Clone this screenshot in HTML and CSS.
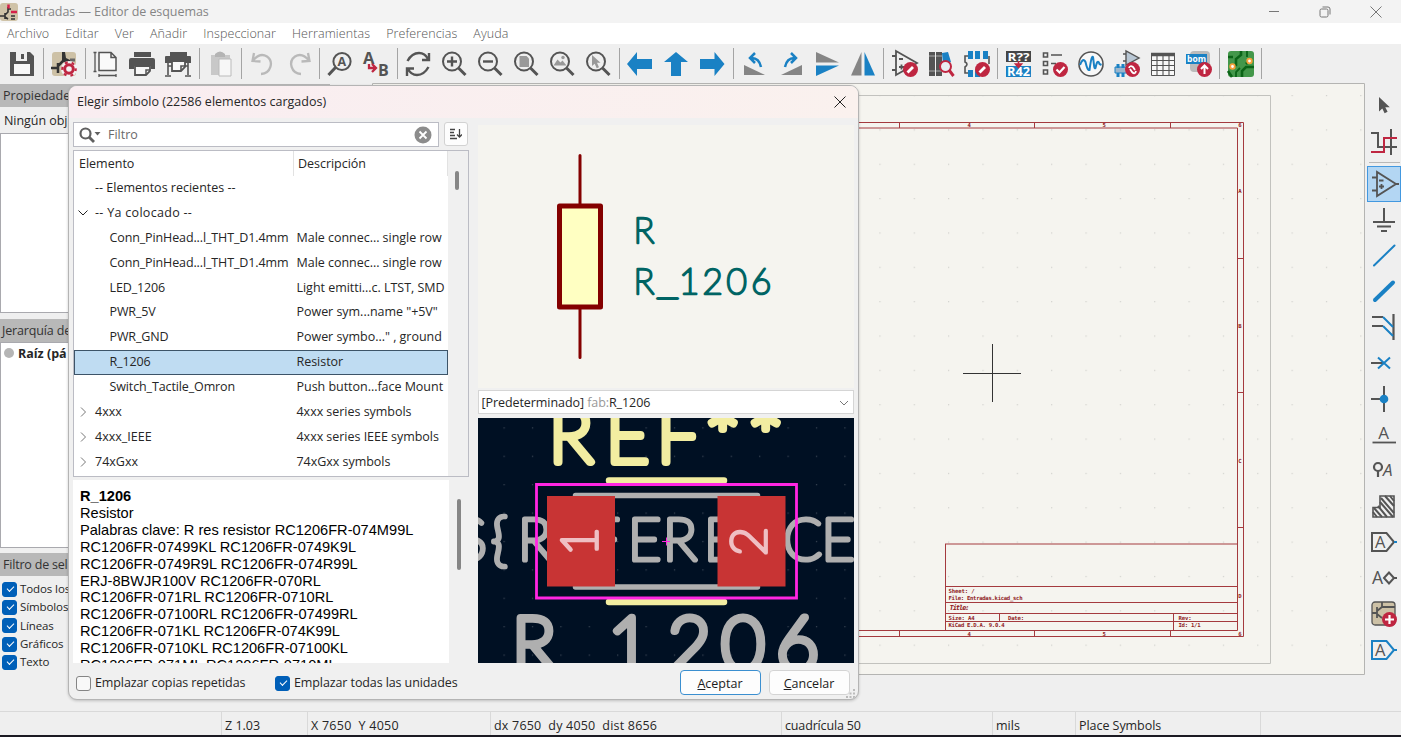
FILE: index.html
```html
<!DOCTYPE html>
<html lang="es">
<head>
<meta charset="utf-8">
<title>Entradas — Editor de esquemas</title>
<link rel="stylesheet" href="styles.css">
</head>
<body>
<div class="window">
  <header class="titlebar">
    <svg class="app-icon" viewBox="0 0 18 18"><rect width="18" height="18" rx="3" fill="#cfc3a8"/><path d="M0 13h5M5 10v6M5 12l3-3V4M8 6h3M5 14l3 2M11 13h4M11 16h4" fill="none" stroke="#333" stroke-width="1.600"/><path d="M8.500 1.500v4" stroke="#d5214b" stroke-width="2.500"/><path d="M11 9h6" stroke="#d5214b" stroke-width="2.500"/></svg>
    <span class="title">Entradas — Editor de esquemas</span>
    <div class="win-controls">
      <svg viewBox="0 0 12 12"><path d="M1 5.500h10"/></svg>
      <svg viewBox="0 0 12 12"><rect x="1" y="3" width="8" height="8" rx="1.500"/><path d="M3.500 1H9q2 0 2 2v5.500"/></svg>
      <svg viewBox="0 0 12 12"><path d="M.5 .5l11 11M11.500 .5l-11 11"/></svg>
    </div>
  </header>
  <nav class="menubar"><span>Archivo</span><span>Editar</span><span>Ver</span><span>Añadir</span><span>Inspeccionar</span><span>Herramientas</span><span>Preferencias</span><span>Ayuda</span></nav>

  <div class="toolbar">
    <svg class="ic" viewBox="0 0 26 26"><path d="M1 1h20l4 4v20H1z" fill="#545454"/><path d="M7 1h11v9H7z" fill="#efefef"/><path d="M12 3h3v5h-3z" fill="#545454"/><path d="M5 13h16v10H5z" fill="#f8f8f8"/></svg>
    <i class="sep"></i>
    <svg class="ic" viewBox="0 0 26 26"><rect x="1" y="1" width="24" height="24" rx="3" fill="#cdc1a6"/><path d="M0 17h7M7 12v10M7 15l5-5" fill="none" stroke="#333" stroke-width="2.500"/><path d="M11 1h3l1 6 4 2v2h-8z" fill="#333"/><path d="M19 9h5" stroke="#666" stroke-width="3"/><circle cx="18" cy="18" r="8" fill="#f2f2f2"/><g fill="none" stroke="#bf2641"><circle cx="18" cy="18" r="4.300" stroke-width="3"/><circle cx="18" cy="18" r="6.700" stroke-width="2.200" stroke-dasharray="3 4.020" stroke-dashoffset="1"/></g></svg>
    <i class="sep"></i>
    <svg class="ic line" viewBox="0 0 26 26"><path d="M6 1.500h12l5 5v13H6zM18 1.500v5h5" fill="#fafafa" stroke-width="1.500"/><path d="M2 1v20M.5 1.500h3M.5 20.500h3M6 24.500h17M6 23v3M23 23v3" stroke-width="1.300"/></svg>
    <svg class="ic" viewBox="0 0 26 26"><path d="M5 1h17v5H5zM2 7h22q2 0 2 2v9h-4v-3H5v3H0V9q0-2 2-2z" fill="#545454"/><path d="M6 15h15v5l-4 4H6z" fill="#f8f8f8" stroke="#545454" stroke-width="1.800"/><path d="M21 19h-4v5" fill="none" stroke="#545454" stroke-width="1.500"/></svg>
    <svg class="ic" viewBox="0 0 26 26"><path d="M5 1h17v4H5zM1 5h24q1 0 1 1v6H0V6q0-1 1-1z" fill="#545454"/><path d="M7 10h13v6l-4 4H7z" fill="#f8f8f8" stroke="#545454" stroke-width="1.800"/><path d="M20 15h-4v5M3 12v12M23 12v12M0 25h6M20 25h6M3 15h4M20 15h3" fill="none" stroke="#545454" stroke-width="1.600"/></svg>
    <i class="sep"></i>
    <svg class="ic" viewBox="0 0 26 26"><path d="M4 4h19v20H4z" fill="#c8c8c8"/><path d="M8 3q5-5 10 0v3H8z" fill="#b4b4b4"/><path d="M12 8h12v17H12z" fill="#f7f7f7" stroke="#bbb"/></svg>
    <i class="sep"></i>
    <svg class="ic pale" viewBox="0 0 26 26"><path d="M5 2L3.500 10l8 .5M4 9.500Q11 1 18 5.500c7 5 4 17-6 17.500"/></svg>
    <svg class="ic pale" viewBox="0 0 26 26"><path d="M23 2l1.500 8-8 .5M24 9.500Q17 1 10 5.500c-7 5-4 17 6 17.500"/></svg>
    <i class="sep"></i>
    <svg class="ic line" viewBox="0 0 26 26"><circle cx="15" cy="10.500" r="8.600" stroke-width="2"/><path d="M8.500 16.500L1.500 24" stroke-width="3"/><text class="glyph bold" x="10.600" y="15" font-size="12.500">A</text></svg>
    <svg class="ic" viewBox="0 0 26 26"><text class="glyph bold" x="0" y="13" font-size="16.500">A</text><text class="glyph bold" x="15" y="25" font-size="16">B</text><path d="M6 13v4h6M9 13l4 4-4 4" fill="none" stroke="#bf2641" stroke-width="2.300"/></svg>
    <i class="sep"></i>
    <svg class="ic line" viewBox="0 0 26 26"><path d="M2.500 10Q7 2 14 2q6 0 9 6M24 2v7h-7M23.500 16Q19 24 12 24q-6 0-9-6M2 25v-7.500h7" stroke-width="2.400"/></svg>
    <svg class="ic line" viewBox="0 0 26 26"><circle cx="11" cy="10.500" r="9" stroke-width="2"/><path d="M17.500 17l7 7" stroke-width="3"/><path d="M6 10.500h10M11 5.500v10" stroke-width="2.400"/></svg>
    <svg class="ic line" viewBox="0 0 26 26"><circle cx="11" cy="10.500" r="9" stroke-width="2"/><path d="M17.500 17l7 7" stroke-width="3"/><path d="M6 10.500h10" stroke-width="2.400"/></svg>
    <svg class="ic line" viewBox="0 0 26 26"><circle cx="11" cy="10.500" r="9" stroke-width="2"/><path d="M17.500 17l7 7" stroke-width="3"/><path d="M6.500 5h7l2.500 2.500V16H6.500z" fill="#999" stroke="none"/></svg>
    <svg class="ic line" viewBox="0 0 26 26"><circle cx="11" cy="10.500" r="9" stroke-width="2"/><path d="M17.500 17l7 7" stroke-width="3"/><path d="M4.500 14.500l4-6 3 3 2-2 4 5z" fill="#999" stroke="none"/><circle cx="14" cy="6.500" r="1.700" fill="#999" stroke="none"/></svg>
    <svg class="ic line" viewBox="0 0 26 26"><circle cx="11" cy="10.500" r="9" stroke-width="2"/><path d="M17.500 17l7 7" stroke-width="3"/><path d="M7 4v11l2.700-2.300 2 4.500 2.300-1-2-4.400h3.500z" fill="#999" stroke="none"/></svg>
    <i class="sep"></i>
    <svg class="ic blue" viewBox="0 0 26 26"><path d="M0 13L10 1v7h15v10H10v7z"/></svg>
    <svg class="ic blue" viewBox="0 0 26 26"><path d="M13 1l12 10h-7v14H8V11H1z"/></svg>
    <svg class="ic blue" viewBox="0 0 26 26"><path d="M25.500 13L15.500 1v7H1v10h14.500v7z"/></svg>
    <i class="sep"></i>
    <svg class="ic" viewBox="0 0 26 26"><path d="M2 14v10h21z" fill="#858585"/><path d="M8 7q9-1 11 9M13 2L8 7l5 5" fill="none" stroke="#1a81c4" stroke-width="2.500"/></svg>
    <svg class="ic" viewBox="0 0 26 26"><path d="M24 14v10H3z" fill="#858585"/><path d="M18 7Q9 6 7 16M13 2l5 5-5 5" fill="none" stroke="#1a81c4" stroke-width="2.500"/></svg>
    <svg class="ic" viewBox="0 0 26 26"><path d="M2 1v10.500h23z" fill="#858585"/><path d="M2 25V14.500h23z" fill="#1a81c4"/></svg>
    <svg class="ic" viewBox="0 0 26 26"><path d="M11.500 1v23.500H1z" fill="#858585"/><path d="M14.500 1v23.500H25z" fill="#1a81c4"/></svg>
    <i class="sep"></i>
    <svg class="ic line" viewBox="0 0 26 26"><path d="M4 0v24L25 12zM0 5h4M0 19h4M7 8h4M7 16h5M9.500 13.500v5" stroke-width="1.800"/><circle cx="18.500" cy="18.500" r="7.500" fill="#bf2641" stroke="none"/><path d="M15.500 21.500l5.500-5.500" stroke="#fff" stroke-width="2.800"/></svg>
    <svg class="ic" viewBox="0 0 26 26"><path d="M1 1h6v24H1zM8 1h6v24H8z" fill="#545454"/><path d="M1 5h6M8 5h6M1 20h6M8 20h6" stroke="#aaa" stroke-width="1.200"/><path d="M14 2l6-1 3 10-8 2z" fill="#1a81c4"/><circle cx="17.500" cy="15.500" r="5.500" fill="#e8edf2" stroke="#bf2641" stroke-width="2"/><path d="M21 19l4.500 6" stroke="#bf2641" stroke-width="3"/></svg>
    <svg class="ic line" viewBox="0 0 26 26"><path d="M5 5H1v6q4 2 0 5v6h5M25 5v8" stroke-width="1.600"/><path d="M4 0h5v8H4zM11 0h5v8h-5zM19 0h5v8h-5zM4 19h5v7H4zM11 19h5v7h-5z" fill="#1a81c4" stroke="none"/><circle cx="18.500" cy="18.500" r="7.500" fill="#bf2641" stroke="none"/><path d="M15.500 21.500l5.500-5.500" stroke="#fff" stroke-width="2.800"/></svg>
    <i class="sep"></i>
    <svg class="ic" viewBox="0 0 26 26"><path d="M0 0h25v11H0z" fill="#454545"/><path d="M0 15h25v11H0z" fill="#1a81c4"/><text class="tag" x="1.500" y="9.500" font-size="11" textLength="22" lengthAdjust="spacingAndGlyphs">R??</text><text class="tag" x="1" y="24.800" font-size="11.500" textLength="23" lengthAdjust="spacingAndGlyphs">R42</text><path d="M12.500 10v6M9.500 13l3 3.500 3-3.500z" stroke="#bf2641" stroke-width="1.600" fill="#bf2641"/></svg>
    <svg class="ic line" viewBox="0 0 26 26"><path d="M1.500 2h4v4h-4zM1.500 10.500h4v4h-4zM1.500 19h4v4h-4zM9 4h11M9 12.500h5" stroke-width="1.600"/><circle cx="18.500" cy="18.500" r="7.500" fill="#bf2641" stroke="none"/><path d="M14.500 18.500l3 3 5-5.500" stroke="#fff" stroke-width="2.200"/></svg>
    <svg class="ic" viewBox="0 0 26 26"><circle cx="13" cy="13" r="12" fill="#f8f8f8" stroke="#545454" stroke-width="1.600"/><path d="M2 14Q5 6 7.500 11q2 9 4 8 2-15 3.500-13c1 6 1 13 2.500 11q2-10 4-4l2 1" fill="none" stroke="#1a81c4" stroke-width="2"/></svg>
    <svg class="ic line" viewBox="0 0 26 26"><path d="M12 0v14l13-7zM9 3h3M9 10h3" stroke-width="1.400" fill="#b9c7d4"/><path d="M1 16h14v6H1z" fill="#9bb5cb" stroke="#1a81c4"/><path d="M4 13v4M9 13v4M4 22v4M9 22v4" stroke="#1a81c4" stroke-width="3"/><circle cx="18.500" cy="18.500" r="7.500" fill="#bf2641" stroke="none"/><path d="M15 17q1-3 4-1l2 3M22 20q-1 4-4 1l-2-3" stroke="#fff" stroke-width="1.800"/></svg>
    <svg class="ic line" viewBox="0 0 26 26"><path d="M1.500 2.500h23v22h-23z" fill="#f8f8f8"/><path d="M1 3.500h24" stroke-width="3.500"/><path d="M1.500 9.500h23M1.500 14.500h23M1.500 19.500h23M7 4v20M13 4v20M19 4v20" stroke-width="1.100"/></svg>
    <svg class="ic" viewBox="0 0 26 26"><rect x="4" y="0" width="20" height="21" rx="4" fill="#bbb"/><path d="M0 3h21v10H0z" fill="#1a81c4"/><text class="tag" x="1" y="10.800" font-size="9.500" textLength="19" lengthAdjust="spacingAndGlyphs">bom</text><circle cx="18.500" cy="18.500" r="7.500" fill="#bf2641"/><path d="M18.500 23v-7.500M15 18l3.500-3.500L22 18" fill="none" stroke="#fff" stroke-width="2"/></svg>
    <i class="sep"></i>
    <svg class="ic" viewBox="0 0 26 26"><rect width="26" height="26" rx="3" fill="#43974a"/><path d="M13 0v4l-5 4v6l-4 2M26 16h-8l-4 4v6M0 6h5M22 9l-4 4M0 20l4 6" fill="none" stroke="#0b6417" stroke-width="2.600"/><path d="M19 0v6M8 26v-5l4-4" fill="none" stroke="#0b6417" stroke-width="1.800"/><circle cx="21.500" cy="10" r="2.300" fill="#fff" stroke="#f5a03a" stroke-width="1.800"/><circle cx="4.500" cy="15.500" r="2.300" fill="#fff" stroke="#f5a03a" stroke-width="1.800"/></svg>
    <i class="sep"></i>
  </div>

  <main class="workspace">
    <aside class="side">
      <div class="pane props"><h2>Propiedade</h2><p class="note">Ningún obj</p><div class="box"></div></div>
      <div class="pane tree-pane"><h2>Jerarquía de</h2><div class="box"><span class="dot"></span><b>Raíz (pá</b></div></div>
      <div class="pane filter-pane"><h2>Filtro de sel</h2>
        <ul>
          <li><span class="check on small"></span>Todos los</li>
          <li><span class="check on small"></span>Símbolos</li>
          <li><span class="check on small"></span>Líneas</li>
          <li><span class="check on small"></span>Gráficos</li>
          <li><span class="check on small"></span>Texto</li>
        </ul>
      </div>
    </aside>
    <svg class="sheet" viewBox="372 83 993 592">
      <defs><pattern id="grid" x="845" y="95" width="34.350" height="34.350" patternUnits="userSpaceOnUse"><rect width="1.200" height="1.200" fill="#d0d0cc"/></pattern></defs>
      <rect x="372" y="83" width="993" height="592" fill="#f5f4ef"/>
      <rect x="372" y="83" width="993" height="592" fill="url(#grid)"/>
      <path d="M400 95.500H1270.500V663.500H400" fill="none" stroke="#c2c2be"/>
      <path d="M372.500 83.500h992v591h-992z" fill="none" stroke="#b4b4b2"/>
      <g class="frame">
        <path d="M400 122.500H1243.500V636.500H400M400 128H1237.500V630.500H400"/>
        <path d="M899.500 122v6M1034.500 122v6M1170.500 122v6M899.500 631v5M1034.500 631v5M1170.500 631v5M1237 258.500h6M1237 392.500h6M1237 527.500h6"/>
        <path d="M945.500 631V544M945 544h292M945.500 586.500h292M945.500 602.500h292M945.500 613.500h292M945.500 621.500h292M999.500 613.500v8M1173.500 613.500v17"/>
      </g>
      <g class="frame-text">
        <text x="967.500" y="127.300">4</text><text x="1102.500" y="127.300">5</text><text x="1238.300" y="127.300">6</text>
        <text x="967.500" y="635.800">4</text><text x="1102.500" y="635.800">5</text><text x="1238.300" y="635.800">6</text>
        <text x="1238.300" y="192.500">A</text><text x="1238.300" y="327.500">B</text><text x="1238.300" y="462.500">C</text><text x="1238.300" y="598">D</text>
        <text x="948.500" y="592.500" textLength="26">Sheet: /</text>
        <text x="948.500" y="599.800" textLength="74">File: Entradas.kicad_sch</text>
        <text x="949.500" y="609.800" class="it title-label" textLength="20">Title:</text>
        <text x="948.500" y="619.800" textLength="26">Size: A4</text><text x="1008" y="619.800" textLength="16">Date:</text><text x="1178.500" y="619.800" textLength="13">Rev:</text>
        <text x="948.500" y="627.300" textLength="56">KiCad E.D.A. 9.0.4</text><text x="1178.500" y="627.300" textLength="22">Id: 1/1</text>
      </g>
      <path d="M963 373.500h58M992.500 344v58" stroke="#333"/>
    </svg>
    <div class="rail">
      <svg class="ic" viewBox="0 0 26 26"><path d="M8 4v14.500l3.300-3 2.300 4.700 3-1.400-2.300-4.600h4.500z" fill="#545454"/></svg>
      <svg class="ic line" viewBox="0 0 26 26"><path d="M0 4h7v14h5M13 18h13M20 0v26" stroke-width="2"/><path d="M0 23h13V9h13" stroke="#bf2641" stroke-width="2"/></svg>
      <i class="hsep"></i>
      <span class="active"><svg class="ic line" viewBox="0 0 26 26"><path d="M5 1v24L24 13zM0 6.500h5M0 19.500h5M24 13h3M7 9.500h4.500M7 15.500h5M9.500 13v5" stroke-width="1.800"/></svg></span>
      <svg class="ic line" viewBox="0 0 26 26"><path d="M13 1v13M2 15h22M6 19.500h14M10 24h6" stroke-width="2"/></svg>
      <svg class="ic" viewBox="0 0 26 26"><path d="M3 23.500L23.500 3.500" stroke="#1a81c4" stroke-width="2" stroke-linecap="round"/></svg>
      <svg class="ic" viewBox="0 0 26 26"><path d="M4 22L22 4.500" stroke="#1a81c4" stroke-width="4" stroke-linecap="round"/></svg>
      <svg class="ic line" viewBox="0 0 26 26"><path d="M1 3h11M1 12h11M22.500 0v26" stroke-width="2.200"/><path d="M12 3l10 10M12 12l10 10" stroke="#1a81c4" stroke-width="2"/></svg>
      <svg class="ic line" viewBox="0 0 26 26"><path d="M0 13h12" stroke-width="2"/><path d="M7 7.500l12 11M19 7.500l-12 11" stroke="#1a81c4" stroke-width="2"/></svg>
      <svg class="ic line" viewBox="0 0 26 26"><path d="M0 13h12M13 0v26" stroke-width="2"/><circle cx="13" cy="13" r="4.300" fill="#1a81c4" stroke="none"/></svg>
      <svg class="ic line" viewBox="0 0 26 26"><text class="glyph" x="7.300" y="17" font-size="17">A</text><path d="M1.500 20.500h23.500" stroke-width="1.800"/></svg>
      <svg class="ic line" viewBox="0 0 26 26"><circle cx="7" cy="9" r="4" stroke-width="2.200"/><path d="M7 13v6" stroke-width="2.200"/><text class="glyph it" x="12" y="17.500" font-size="17">A</text></svg>
      <svg class="ic line" viewBox="0 0 26 26"><path d="M9 2h14v21H2v-9.500h7z" stroke-width="1.600"/><path d="M10 4l13 15M14 2l9 10M19 2l4 5M9 8l13 15M7 12l9 11M3 14l8 9M2 18l4 5" stroke-width="2"/></svg>
      <svg class="ic line" viewBox="0 0 26 26"><path d="M1 4h14.500L23 13l-7.500 9H1z" stroke-width="2"/><path d="M23 13h3" stroke="#1a81c4" stroke-width="2"/><text class="glyph" x="4" y="19" font-size="16.500">A</text></svg>
      <svg class="ic line" viewBox="0 0 26 26"><text class="glyph" x="1" y="19" font-size="17.500">A</text><path d="M13 13l5-5.500 5 5.500-5 5.500zM23 13h3" stroke-width="2"/></svg>
      <svg class="ic line" viewBox="0 0 26 26"><rect x="1" y="1" width="23" height="23" rx="3" fill="#cdc1a6" stroke-width="1.300"/><path d="M1 12h5M6 6v11M6 10l5-4h13M11 1v5M6 13l5 4" stroke-width="1.800"/><circle cx="18.500" cy="18.500" r="7.500" fill="#bf2641" stroke="none"/><path d="M14 18.500h9M18.500 14v9" stroke="#fff" stroke-width="2.200"/></svg>
      <svg class="ic line" viewBox="0 0 26 26"><path d="M1 4h14.500L23 13l-7.500 9H1zM23 13h3" stroke="#1a81c4" stroke-width="2"/><text class="glyph" x="4" y="19" font-size="16.500">A</text></svg>
    </div>
  </main>

  <footer class="statusbar"><span class="s0"></span><span class="s1">Z 1.03</span><span class="s2">X 7650&nbsp; Y 4050</span><span class="s3">dx 7650&nbsp; dy 4050&nbsp; dist 8656</span><span class="s4">cuadrícula 50</span><span class="s5">mils</span><span class="s6">Place Symbols</span><span class="s7"></span></footer>
</div>

<section class="dialog">
  <header class="dialog-title"><span>Elegir símbolo (22586 elementos cargados)</span><svg viewBox="0 0 12 12"><path d="M.5 .5l11 11M11.500 .5l-11 11"/></svg></header>
  <div class="dialog-body">
    <div class="left">
      <div class="search-row">
        <div class="search">
          <svg class="lens" viewBox="0 0 22 16"><circle cx="6.500" cy="6.500" r="5" fill="none" stroke="#606060" stroke-width="2.200"/><path d="M10 10l5 5" stroke="#606060" stroke-width="2.800"/><path d="M15.500 5h6l-3 3.500z" fill="#606060"/></svg>
          <span>Filtro</span>
          <svg class="clear" viewBox="0 0 18 18"><circle cx="9" cy="9" r="8.500" fill="#8c8c8c"/><path d="M5.500 5.500l7 7M12.500 5.500l-7 7" stroke="#fff" stroke-width="1.800"/></svg>
        </div>
        <div class="sort"><svg viewBox="0 0 12 12"><path d="M0 1.500h5M0 4.500h4M0 7.500h5M0 10.500h7M9.500 1v8M7 6.500L9.500 9 12 6.500" fill="none" stroke="#444" stroke-width="1.300"/></svg></div>
      </div>
      <div class="list">
        <div class="rows">
          <div class="row head"><span class="name">Elemento</span><span class="desc">Descripción</span></div>
          <div class="row l1"><span class="name">-- Elementos recientes --</span></div>
          <div class="row l1"><svg class="tw open" viewBox="0 0 10 10"><path d="M.5 2.500L5 7l4.500-4.500"/></svg><span class="name wide">-- Ya colocado --</span></div>
          <div class="row l2"><span class="name">Conn_PinHead...l_THT_D1.4mm</span><span class="desc">Male connec... single row</span></div>
          <div class="row l2"><span class="name">Conn_PinHead...l_THT_D1.4mm</span><span class="desc">Male connec... single row</span></div>
          <div class="row l2"><span class="name">LED_1206</span><span class="desc">Light emitti...c. LTST, SMD</span></div>
          <div class="row l2"><span class="name">PWR_5V</span><span class="desc">Power sym...name "+5V"</span></div>
          <div class="row l2"><span class="name">PWR_GND</span><span class="desc">Power symbo..." , ground</span></div>
          <div class="row l2 selected"><span class="name">R_1206</span><span class="desc">Resistor</span></div>
          <div class="row l2"><span class="name">Switch_Tactile_Omron</span><span class="desc">Push button...face Mount</span></div>
          <div class="row l1"><svg class="tw" viewBox="0 0 10 10"><path d="M3 .5L7.500 5 3 9.500"/></svg><span class="name">4xxx</span><span class="desc">4xxx series symbols</span></div>
          <div class="row l1"><svg class="tw" viewBox="0 0 10 10"><path d="M3 .5L7.500 5 3 9.500"/></svg><span class="name">4xxx_IEEE</span><span class="desc">4xxx series IEEE symbols</span></div>
          <div class="row l1"><svg class="tw" viewBox="0 0 10 10"><path d="M3 .5L7.500 5 3 9.500"/></svg><span class="name">74xGxx</span><span class="desc">74xGxx symbols</span></div>
        </div>
        <div class="scroll"><i class="thumb"></i></div>
      </div>
      <div class="details">
        <div class="text"><b>R_1206</b><br>Resistor<br>Palabras clave: R res resistor RC1206FR-074M99L<br>RC1206FR-07499KL RC1206FR-0749K9L<br>RC1206FR-0749R9L RC1206FR-074R99L<br>ERJ-8BWJR100V RC1206FR-070RL<br>RC1206FR-071RL RC1206FR-0710RL<br>RC1206FR-07100RL RC1206FR-07499RL<br>RC1206FR-071KL RC1206FR-074K99L<br>RC1206FR-0710KL RC1206FR-07100KL<br>RC1206FR-071ML RC1206FR-0710ML</div>
        <div class="scroll2"><i class="thumb"></i></div>
      </div>
    </div>
    <div class="right">
      <svg class="symbol" viewBox="478 125 376 263">
        <rect x="478" y="125" width="376" height="263" fill="#f5f4ef"/>
        <path d="M580 155.500V205M580 308v49.500" stroke="#840000" stroke-width="3" stroke-linecap="round"/>
        <rect x="559.500" y="206" width="41" height="101" fill="#ffffc2" stroke="#840000" stroke-width="5" stroke-linejoin="round"/>
        <g class="stroke-font teal"><text x="633.500" y="243">R</text><text x="633.500" y="293.500">R</text><text x="656.500" y="293.500" textLength="22" lengthAdjust="spacingAndGlyphs">_</text><text x="679 702.500 726.500 751" y="293.500">1206</text></g>
      </svg>
      <div class="combo"><span>[Predeterminado] <em>fab:</em>R_1206</span><svg viewBox="0 0 10 10"><path d="M1 3l4 4 4-4"/></svg></div>
      <svg class="footprint" viewBox="478 418 376 245">
        <defs><pattern id="pgrid" x="503.500" y="427.300" width="28.400" height="28.400" patternUnits="userSpaceOnUse"><rect width="1.200" height="1.200" fill="#3a4654"/></pattern></defs>
        <rect x="478" y="418" width="376" height="245" fill="#001023"/>
        <rect x="478" y="418" width="376" height="245" fill="url(#pgrid)"/>
        <g class="stroke-font silk"><text x="549 606 657" y="462">REF</text><text class="stars" x="704 747" y="470">**</text></g>
        <path d="M609 480.500H724M609 602H724" stroke="#f2eda1" stroke-width="6.500" stroke-linecap="round"/>
        <path d="M575.500 495.500H757.500M575.500 587H757.500" stroke="#afafaf" stroke-width="5.500" stroke-linecap="round"/>
        <g class="stroke-font fab"><text x="455 491 518 560 587.500 628 663 704 743 783 821.500" y="560">${REFERENCE</text></g>
        <g class="stroke-font fab big"><text x="512 608 668 721.500 776" y="670">R1206</text></g>
        <path d="M547 496h68v90.500h-68zM717.500 496h68v90.500h-68z" fill="#c83434"/>
        <g class="stroke-font pad"><text transform="translate(597 556) rotate(-90)">1</text><text transform="translate(766 556) rotate(-90)">2</text></g>
        <path d="M536.500 484.500H796.500V598H536.500z" fill="none" stroke="#ff26e2" stroke-width="2.800"/>
        <path d="M662 541.500h8M666.500 537.500v8" stroke="#ff26e2"/>
      </svg>
    </div>
  </div>
  <footer class="dialog-foot">
    <label class="c1"><span class="check"></span>Emplazar copias repetidas</label>
    <label class="c2"><span class="check on"></span>Emplazar todas las unidades</label>
    <button class="primary"><span><u>A</u>ceptar</span></button><button><span><u>C</u>ancelar</span></button>
  </footer>
  <svg class="grip" viewBox="0 0 9 9"><path d="M7 0h2v2H7zM3.500 3.500h2v2h-2zM7 3.500h2v2H7zM0 7h2v2H0zM3.500 7h2v2h-2zM7 7h2v2H7z" fill="#bbb"/></svg>
</section>
</body>
</html>
```

FILE: styles.css
```css
* { box-sizing: border-box; }
body { margin: 0; width: 1401px; height: 737px; overflow: hidden; background: #efefef; color: #262626; font: 12.5px/16px "Open Sans", "Noto Sans", sans-serif; }
svg { display: block; flex: none; }
.window { display: flex; flex-direction: column; width: 1401px; height: 737px; border-bottom: 2px solid #1b1a22; }

.titlebar { flex: none; display: flex; align-items: center; height: 23px; background: #f3f3f3; color: #858585; }
.app-icon { width: 18px; height: 18px; margin-right: 6px; }
.titlebar .title { flex: 1; letter-spacing: -.06px; }
.win-controls { display: flex; gap: 39px; margin-right: 19px; }
.win-controls svg { width: 12px; height: 12px; fill: none; stroke: #777; }
.menubar { flex: none; display: flex; align-items: center; gap: 16px; height: 21px; padding: 1px 0 0 7px; background: #fff; color: #555; font-weight: 300; letter-spacing: .1px; }

.toolbar { flex: none; display: flex; align-items: center; height: 39px; padding-left: 4px; background: #efefef; }
.ic { width: 26px; height: 26px; overflow: visible; }
.toolbar .ic { margin: 0 5px; }
.line { fill: none; stroke: #545454; }
.pale { fill: none; stroke: #b9b9b9; stroke-width: 2.300px; }
.blue { fill: #1a81c4; }
.glyph { fill: #545454; stroke: none; font-family: "Open Sans", sans-serif; }
.bold { font-weight: 700; }
.it { font-style: italic; }
.tag { fill: #fff; font-family: "Open Sans", sans-serif; font-weight: 700; }
.sep { flex: none; width: 1px; height: 31px; margin: 0 2.540px; background: #a4a4a4; }

.workspace { flex: none; display: flex; height: 628px; }
.side { width: 330px; height: 600px; margin-right: 42px; display: flex; flex-direction: column; gap: 6px; padding-top: 1px; }
.pane { display: flex; flex-direction: column; }
.pane h2 { flex: none; margin: 0; height: 23px; padding-left: 3px; background: #b8b8b8; font-size: 12.500px; font-weight: 400; line-height: 23px; color: #333; }
.note { margin: 0; height: 26px; padding-left: 4px; line-height: 27px; letter-spacing: -.05px; }
.box { flex: 1; display: flex; gap: 4px; padding: 3px; background: #fff; border: 1px solid #a9a9ae; }
.props { height: 229px; }
.tree-pane { height: 229px; }
.tree-pane h2 { padding-left: 2px; letter-spacing: -.15px; }
.filter-pane { margin-top: -1px; }
.filter-pane h2 { letter-spacing: -.2px; }
.filter-pane ul { margin: 4px 0 0; padding: 0 0 0 2px; list-style: none; font-size: 11.500px; letter-spacing: -.1px; }
.filter-pane li { display: flex; align-items: center; gap: 3px; height: 18.300px; }
.dot { width: 10px; height: 10px; margin-top: 2px; border-radius: 50%; background: #b5b5b5; }
.check { flex: none; position: relative; width: 15px; height: 15px; border: 1px solid #858585; border-radius: 3px; background: #f8f8f8; }
.check.on { background: #005fb8; border-color: #005fb8; }
.check.on::after { content: ""; position: absolute; left: 3.500px; top: 3.500px; width: 6px; height: 3px; border: solid #fff; border-width: 0 0 1.200px 1.200px; transform: rotate(-45deg); }

.sheet { width: 993px; height: 592px; }
.frame { fill: none; stroke: #a43a3e; }
.frame-text { fill: #8f1a1e; font: 700 5.600px "DejaVu Sans Mono", monospace; }
.title-label { font-size: 7px; }
.rail { display: flex; flex-direction: column; align-items: center; width: 36px; padding-top: 5px; padding-left: 2px; }
.rail .ic { margin: 4.950px 0; }
.hsep { width: 31px; height: 1px; margin: 2px 0 3px; background: #b8b8b8; }
.active { width: 34px; height: 35.900px; padding-left: 4px; background: #b3d6f3; border: 1px solid #4298e0; }
.active .ic { margin-top: 4px; }

.statusbar { flex: none; display: flex; height: 24px; border-top: 1px solid #d9d9d9; line-height: 27px; }
.statusbar span { padding-left: 3px; border-right: 1px solid #d9d9d9; white-space: nowrap; }
.s0 { width: 222px; } .s1 { width: 86px; } .s2 { width: 183px; letter-spacing: .25px; } .s3 { width: 291px; letter-spacing: .2px; }
.s4 { width: 211px; letter-spacing: -.15px; } .s5 { width: 83px; } .s6 { width: 185px; letter-spacing: -.05px; }
.statusbar .s7 { border: 0; }

.dialog { position: absolute; left: 68px; top: 85px; width: 791px; height: 615px; background: #f0f0f0; border: 1.500px solid #b4b4b4; border-radius: 9px; overflow: hidden; box-shadow: 0 1px 3px #0003; }
.dialog-title { display: flex; align-items: center; justify-content: space-between; height: 32px; padding: 0 12px 0 8px; background: linear-gradient(90deg, #f9edf1, #faf1ee); font-size: 12.500px; }
.dialog-title svg { width: 12px; height: 12px; stroke: #222; fill: none; }
.dialog-body { display: flex; gap: 9px; padding: 4px 0 0 4px; height: 547px; }
.left { width: 395.500px; }
.search-row { display: flex; gap: 5px; }
.search { display: flex; align-items: center; width: 366px; height: 25px; padding: 0 6px 0 5px; background: #fff; border: 1px solid #bbbcc4; color: #6a6a6a; }
.lens { width: 22px; height: 16px; margin-right: 7px; }
.search span { flex: 1; }
.clear { width: 18px; height: 18px; }
.sort { display: flex; align-items: center; justify-content: center; width: 24px; height: 24px; background: #fdfdfd; border: 1px solid #d2d2d2; border-radius: 3px; }
.sort svg { width: 12px; height: 12px; }
.list { display: flex; height: 327px; margin-top: 3px; background: #fff; border: 1px solid #bbbcc4; }
.rows { width: 374px; }
.row { position: relative; display: flex; align-items: center; height: 24.850px; white-space: nowrap; }
.row .name { width: 222.500px; }
.row .desc { flex: 1; letter-spacing: -.03px; }
.head .name { width: 220px; padding-left: 5px; line-height: 25px; border-right: 1px solid #e2e2e2; }
.head .desc { padding-left: 4px; line-height: 25px; border-right: 1px solid #e2e2e2; }
.l1 .name { padding-left: 21px; }
.l1 .wide { letter-spacing: .3px; }
.l2 .name { padding-left: 35.500px; letter-spacing: -.12px; }
.tw { position: absolute; left: 4px; width: 10px; height: 10px; fill: none; stroke: #777; }
.tw.open { stroke: #222; }
.selected { background: #bfdcf2; box-shadow: inset 0 0 0 1px #3d5468; }
.scroll { width: 19.500px; background: #f0f0f0; }
.scroll .thumb { display: block; width: 4px; height: 19px; margin: 20px 0 0 7px; border-radius: 2px; background: #868686; }
.details { display: flex; height: 183px; margin-top: 3px; overflow: hidden; }
.details .text { width: 376px; padding: 8px 0 0 7px; background: #fff; color: #000; font: 14.600px/16.900px "Liberation Sans", Arial, sans-serif; white-space: nowrap; }
.scroll2 .thumb { display: block; width: 4px; height: 71px; margin: 19px 0 0 8px; border-radius: 2px; background: #868686; }
.right { width: 376px; padding-top: 3px; }
.symbol { width: 376px; height: 263px; }
.combo { display: flex; align-items: center; justify-content: space-between; height: 24px; margin: 2px 0 4px; padding: 2px 4px 0 3px; background: #fff; border: 1px solid #d5d5d5; letter-spacing: -.07px; }
.combo em { color: #999; font-style: normal; }
.combo svg { width: 10px; height: 10px; fill: none; stroke: #777; }
.footprint { width: 376px; height: 245px; }

.stroke-font { font-family: Lato, "Open Sans", sans-serif; font-weight: 100; stroke-linejoin: round; stroke-linecap: round; }
.teal { fill: #006464; stroke: #006464; stroke-width: 2.500px; font-size: 35px; }
.silk { fill: #f2eda1; stroke: #f2eda1; stroke-width: 8px; font-size: 74px; }
.stars { font-size: 88px; }
.fab { fill: #afafaf; stroke: #afafaf; stroke-width: 5.200px; font-size: 57px; }
.big { stroke-width: 8px; font-size: 74px; }
.pad { fill: #efbfc3; stroke: #efbfc3; stroke-width: 3.800px; font-size: 50px; }

.dialog-foot { display: flex; align-items: center; height: 34px; padding: 1px 0 0 7px; }
.dialog-foot label { display: flex; align-items: center; gap: 4px; margin-top: 1px; white-space: nowrap; letter-spacing: -.1px; }
.c1 { width: 199px; }
.c2 { width: 404.500px; }
button { display: flex; align-items: center; justify-content: center; width: 81px; height: 25px; margin-right: 8px; padding: 2px 0 0; background: #fdfdfd; border: 1px solid #d4d4d4; border-radius: 4px; color: #1c1c1c; font: inherit; }
button.primary { border-color: #3b8fd0; }
.grip { position: absolute; right: 3px; bottom: 1px; width: 9px; height: 9px; }
```
